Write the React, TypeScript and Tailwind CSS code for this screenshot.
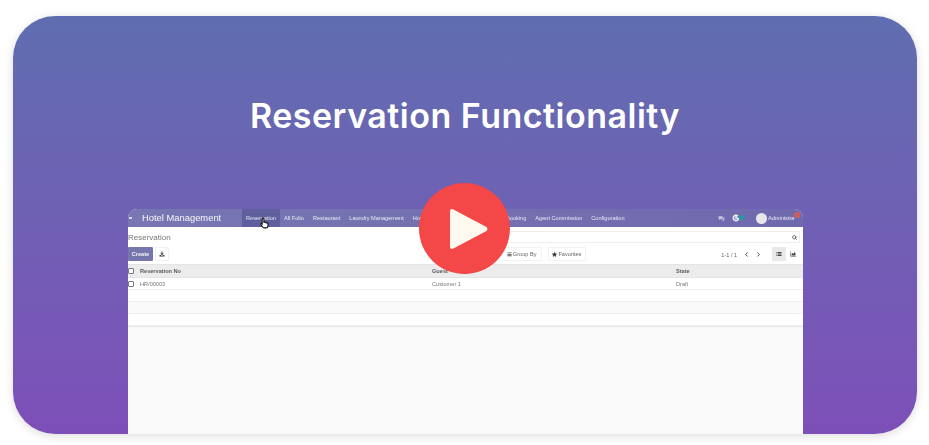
import { Search, Star, ChevronLeft, ChevronRight } from "lucide-react";

const font = { fontFamily: '"Liberation Sans", Arial, sans-serif' };

function Check() {
  return <span className="block h-[6px] w-[6px] rounded-[1px] border border-[#777] bg-white" />;
}

function Row({ a, b, c, head, alt }: { a?: string; b?: string; c?: string; head?: boolean; alt?: boolean }) {
  return (
    <div
      className={
        "grid grid-cols-[12px_292px_244px_1fr] items-center " +
        (head
          ? "h-[14px] bg-[#ececec] border-y border-[#e4e4e4] font-bold text-[#5a5a5a] "
          : "h-[12px] border-b border-[#f0f0f0] pt-[1px] text-[#777] " + (alt ? "bg-[#fafafa] " : "bg-white "))
      }
    >
      <span className="flex">{a || head ? <Check /> : null}</span>
      <span>{head ? "Reservation No" : a}</span>
      <span>{head ? "Guest" : b}</span>
      <span>{head ? "State" : c}</span>
    </div>
  );
}

function Glyph({ d, cls }: { d: string; cls: string }) {
  return (
    <svg viewBox="0 0 12 12" className={cls} fill="currentColor">
      <path d={d} />
    </svg>
  );
}

export default function App() {
  return (
    <div className="h-[445px] w-[929px] overflow-hidden bg-white pb-[11px] pl-[13px] pr-[12px] pt-[16px]">
      <div className="relative flex h-[418px] flex-col overflow-hidden rounded-[42px] bg-gradient-to-b from-[#5f6eb0] to-[#7d4fb8] shadow-[0_2px_10px_rgba(0,0,0,0.14)]">
        <h1
          className="mt-[80px] text-center text-[34px] font-semibold leading-[40px] tracking-[0.5px] text-white"
          style={{ fontFamily: 'Inter, "Open Sans", sans-serif' }}
        >
          Reservation Functionality
        </h1>
        <div
          className="ml-[115px] mt-[73px] flex w-[675px] flex-1 flex-col overflow-hidden rounded-t-[9px] bg-[#f9f9f9] text-[5.6px] blur-[0.5px]"
          style={font}
        >
          <div className="relative flex h-[18px] items-center bg-gradient-to-r from-[#7876b3] to-[#6f6aae] text-white/85">
            <span className="ml-[1px] h-[2px] w-[3px] bg-white/70" />
            <span className="ml-[10px] w-[100px] whitespace-nowrap text-[9.4px] text-white/95">Hotel Management</span>
            <span className="flex h-full w-[38px] items-center justify-center bg-[#5f5e9f]">Reservation</span>
            <div className="ml-[4px] flex gap-[9px] whitespace-nowrap">
              <span>All Folio</span>
              <span>Restaurant</span>
              <span>Laundry Management</span>
              <span className="w-[62px]">Housekeeping</span>
              <span>Banquet Booking</span>
              <span>Agent Commission</span>
              <span>Configuration</span>
            </div>
            <div className="ml-auto flex items-center pr-[4px]">
              <Glyph cls="h-[7px] w-[7px] text-white/60" d="M1 2h7v5H4L2 9V7H1zM9 4h2v5h-1v2L8 9H5V8h4z" />
              <svg viewBox="0 0 12 12" className="ml-[7px] h-[8px] w-[8px] text-white/90" fill="none" stroke="currentColor" strokeWidth="2.4">
                <path d="M10 6a4 4 0 1 1-1.2-2.9M6 3.5V6h2.5" />
              </svg>
              <span className="-ml-[1px] mb-[1px] h-[5px] w-[5px] rounded-full bg-[#1f9aa8]" />
              <span className="ml-[12px] h-[11px] w-[11px] rounded-full bg-[#e8e8ea]" />
              <span className="ml-[1px] w-[31px] whitespace-nowrap">Administra</span>
            </div>
            <span className="absolute right-[3px] top-[3px] h-[6px] w-[6px] rounded-[2px] bg-[#c9605e]" />
            <svg viewBox="0 0 12 16" className="absolute left-[132px] top-[8px] h-[12px] w-[9px] overflow-visible">
              <path
                d="M4 1.5c.8 0 1.2.5 1.2 1.2V7l.8-.3c.6 0 1 .3 1 .7l.8-.2c.6 0 1 .4 1 .7l.7-.1c.7 0 1.1.5 1.1 1.2v2.5c0 1.5-1 3-2.2 3H5.5c-1 0-1.6-.6-2.2-1.6L1 9.8c-.4-.7.5-1.5 1.2-1l.7.6V2.7C2.9 2 3.3 1.5 4 1.5z"
                fill="#fff"
                stroke="#111"
                strokeWidth="1.4"
              />
            </svg>
          </div>
          <div className="flex h-[20px] items-center bg-white pr-[3px]">
            <span className="pt-[1px] text-[8px] text-[#777]">Reservation</span>
            <div className="ml-auto flex h-[12px] w-[360px] items-center justify-end border border-[#eeeeee] pr-[2px]">
              <Search className="h-[5px] w-[5px] text-[#555]" strokeWidth={4} />
            </div>
          </div>
          <div className="flex h-[17px] items-start whitespace-nowrap bg-white pr-[3px] text-[#666]">
            <span className="flex h-[14px] w-[25px] items-center justify-center rounded-[1px] bg-[#7676ae] font-bold text-white/90">Create</span>
            <span className="ml-[2px] flex h-[14px] w-[14px] items-center justify-center border border-[#f2f2f2]">
              <Glyph cls="h-[6px] w-[6px] text-[#333]" d="M5 1h2v4h2.5L6 8.5 2.5 5H5zM1 8h2l3 2 3-2h2v3H1z" />
            </span>
            <span className="ml-[333px] flex h-[14px] w-[40px] items-center justify-center gap-[1px] border border-[#f2f2f2]">
              <Glyph cls="h-[5px] w-[5px] text-[#555]" d="M1 1h10v2H1zM1 4.5h10v2H1zM1 8h10v2H1z" />
              Group By
            </span>
            <span className="ml-[6px] flex h-[14px] w-[39px] items-center justify-center gap-[1px] border border-[#f2f2f2]">
              <Star className="h-[5px] w-[5px] fill-[#333] text-[#333]" />
              Favorites
            </span>
            <span className="ml-[135px] mt-[4px] w-[15px]">1-1 / 1</span>
            <ChevronLeft className="ml-[7px] mt-[4px] h-[7px] w-[7px] text-[#333]" strokeWidth={3} />
            <ChevronRight className="ml-[5px] mt-[4px] h-[7px] w-[7px] text-[#333]" strokeWidth={3} />
            <span className="ml-[10px] flex h-[14px] w-[14px] items-center justify-center bg-[#e9e9e9]">
              <Glyph cls="h-[6px] w-[6px] text-[#444]" d="M1 2h2v2H1zM4 2h7v2H4zM1 5h2v2H1zM4 5h7v2H4zM1 8h2v2H1zM4 8h7v2H4z" />
            </span>
            <span className="flex h-[14px] w-[14px] items-center justify-center">
              <Glyph cls="h-[6px] w-[6px] text-[#444]" d="M1 1h1v9h10v1H1zM3 9V6l2-2 2 2 2-4 2 3v4z" />
            </span>
          </div>
          <Row head />
          <Row a="HR/00003" b="Customer 1" c="Draft" />
          <Row />
          <Row alt />
          <Row />
          <div className="h-[1px] bg-[#e8e8e8]" />
        </div>
        <div className="absolute left-[406px] top-[167px] flex h-[91px] w-[91px] items-center justify-center rounded-full bg-[#f44747]">
          <svg width="40" height="44" viewBox="0 0 40 44" className="ml-[9px]">
            <path d="M3 3 L37 21 Q38 22 37 23 L3 41 Q2 41 2 40 L2 4 Q2 3 3 3 Z" fill="#fdf9ee" stroke="#fdf9ee" strokeWidth="2" strokeLinejoin="round" />
          </svg>
        </div>
      </div>
    </div>
  );
}
